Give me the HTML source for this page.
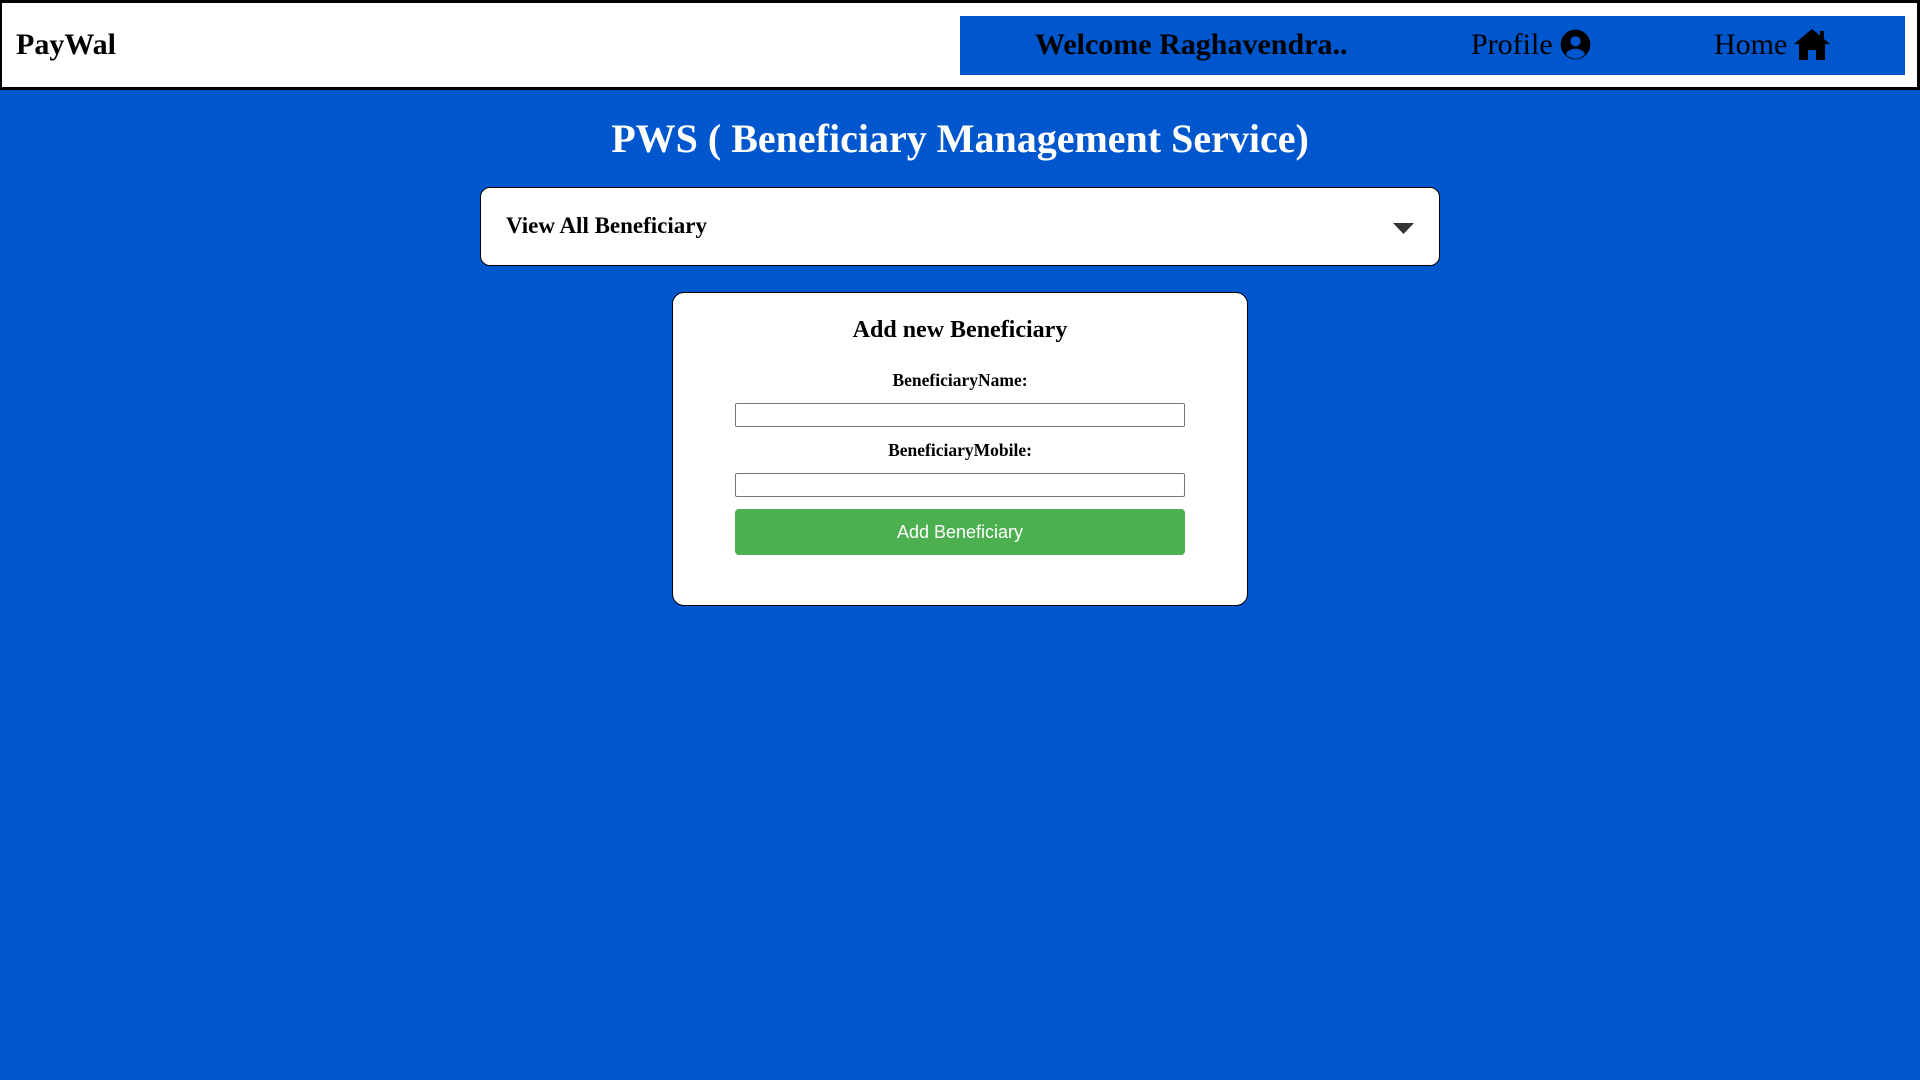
<!DOCTYPE html>
<html><head><meta charset="utf-8"><style>
*{margin:0;padding:0;box-sizing:border-box}
body{width:1920px;height:1080px;background:#0057cd;font-family:"Liberation Serif",serif;position:relative;overflow:hidden}
.hdr{position:absolute;left:0;top:0;width:1920px;height:90px;background:#fff;border:3px solid #000;border-left-width:2px}
.a{position:absolute;white-space:nowrap}
.nav{position:absolute;left:960px;top:16px;width:945px;height:59px;background:#0057cd}
.dd{position:absolute;left:480px;top:187px;width:960px;height:79px;background:#fff;border:1px solid #000;border-radius:10px}
.card{position:absolute;left:672px;top:292px;width:576px;height:314px;background:#fff;border:1px solid #000;border-radius:12px}
.inp{position:absolute;left:735px;width:450px;height:24px;border:1px solid #767676;border-radius:2px;background:#fff}
.btn{position:absolute;left:735px;top:509px;width:450px;height:46px;background:#4caf50;border-radius:4px;color:#fff;font-family:"Liberation Sans",sans-serif;font-size:18px;text-align:center;line-height:46px}
</style></head><body>
<div class="hdr"></div>
<div class="a" style="left:16px;top:28px;font-size:30px;font-weight:bold;">PayWal</div>
<div class="nav"></div>
<div class="a" style="left:1035px;top:28px;font-size:30px;font-weight:bold;">Welcome Raghavendra..</div>
<div class="a" style="left:1471px;top:28px;font-size:30px;">Profile</div>
<svg class="a" style="left:1560px;top:29px" width="31" height="31" viewBox="0 0 24 24"><circle cx="12" cy="12" r="11.5" fill="#000"/><circle cx="12" cy="9.5" r="4" fill="#0057cd"/><path d="M4.5 19.5c1.5-3 4.5-4.3 7.5-4.3s6 1.3 7.5 4.3A11 11 0 0 1 12 23a11 11 0 0 1-7.5-3.5z" fill="#0057cd"/></svg>
<div class="a" style="left:1714px;top:28px;font-size:30px;">Home</div>
<svg class="a" style="left:1794px;top:29px" width="36" height="31" viewBox="0 0 36 31"><path d="M18 0L0 15h5v16h9V21h8v10h9V15h5L30 10V2h-4v4.5z" fill="#000"/></svg>
<div class="a" style="left:0;width:1920px;text-align:center;top:115px;font-size:40px;font-weight:bold;color:#fff;">PWS ( Beneficiary Management Service)</div>
<div class="dd"></div>
<div class="a" style="left:506px;top:213px;font-size:23px;font-weight:bold;">View All Beneficiary</div>
<svg class="a" style="left:1393px;top:223px" width="21" height="11"><path d="M0 0h21L10.5 11z" fill="#333"/></svg>
<div class="card"></div>
<div class="a" style="left:672px;width:576px;text-align:center;top:317px;font-size:24px;font-weight:bold;">Add new Beneficiary</div>
<div class="a" style="left:672px;width:576px;text-align:center;top:370px;font-size:17.5px;font-weight:bold;">BeneficiaryName:</div>
<div class="inp" style="top:403px"></div>
<div class="a" style="left:672px;width:576px;text-align:center;top:440px;font-size:17.5px;font-weight:bold;">BeneficiaryMobile:</div>
<div class="inp" style="top:473px"></div>
<div class="btn">Add Beneficiary</div>
</body></html>
